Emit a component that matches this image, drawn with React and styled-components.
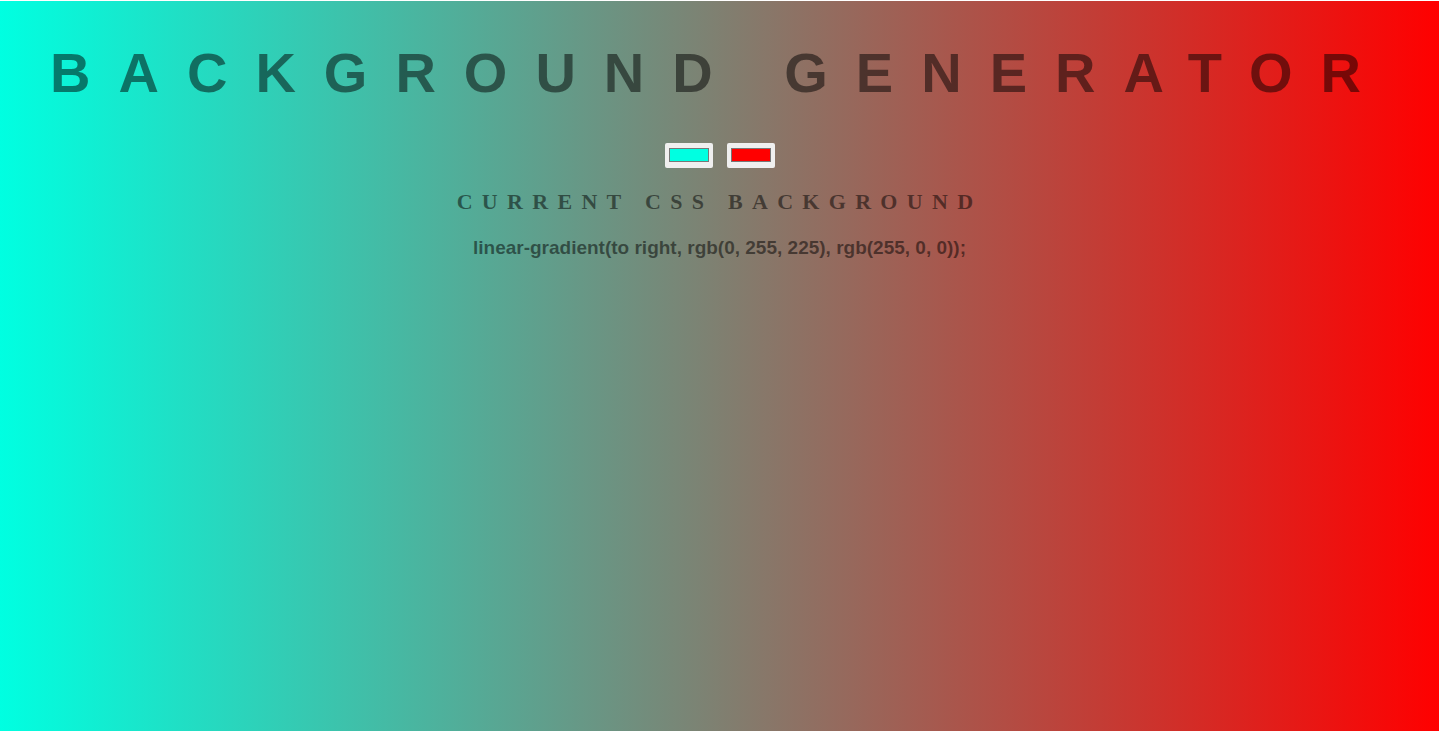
import React, { useState } from 'react';
import styled, { createGlobalStyle } from 'styled-components';

const GlobalStyle = createGlobalStyle`
  html, body {
    margin: 0;
    padding: 0;
    background: #ffffff;
  }
`;

const Page = styled.div`
  min-height: 730px;
  margin-top: 1px;
  display: flex;
  flex-direction: column;
  align-items: center;
  text-align: center;
  color: rgba(0, 0, 0, 0.5);
  background: ${(p) => p.gradient};
`;

const Title = styled.h1`
  margin: 40px 0 0;
  font: 700 56px/64px 'Liberation Sans', Arial, sans-serif;
  letter-spacing: 0.5em;
`;

const Pickers = styled.div`
  margin-top: 38px;
  display: flex;
  gap: 14px;
`;

const ColorInput = styled.input`
  -webkit-appearance: none;
  appearance: none;
  width: 48px;
  height: 25px;
  margin: 0;
  padding: 5px 4px 6px;
  border: none;
  border-radius: 2px;
  background: #efefef;
  cursor: pointer;

  &::-webkit-color-swatch-wrapper {
    padding: 0;
  }

  &::-webkit-color-swatch {
    border: 1px solid #777777;
    border-radius: 0;
  }
`;

const Subtitle = styled.h3`
  margin: 21px 0 0;
  font: 700 22px/26px 'Liberation Serif', 'Times New Roman', serif;
  letter-spacing: 9.3px;
`;

const Code = styled.h3`
  margin: 22px 0 0;
  font: 700 19px/22px 'Liberation Sans', Arial, sans-serif;
`;

const hexToRgb = (hex) => {
  const n = parseInt(hex.slice(1), 16);
  return `rgb(${(n >> 16) & 255}, ${(n >> 8) & 255}, ${n & 255})`;
};

export default function App() {
  const [left, setLeft] = useState('#00ffe1');
  const [right, setRight] = useState('#ff0000');
  const gradient = `linear-gradient(to right, ${hexToRgb(left)}, ${hexToRgb(right)})`;

  return (
    <>
      <GlobalStyle />
      <Page gradient={gradient}>
        <Title>BACKGROUND GENERATOR</Title>
        <Pickers>
          <ColorInput type="color" value={left} onChange={(e) => setLeft(e.target.value)} />
          <ColorInput type="color" value={right} onChange={(e) => setRight(e.target.value)} />
        </Pickers>
        <Subtitle>CURRENT CSS BACKGROUND</Subtitle>
        <Code>{`${gradient};`}</Code>
      </Page>
    </>
  );
}
